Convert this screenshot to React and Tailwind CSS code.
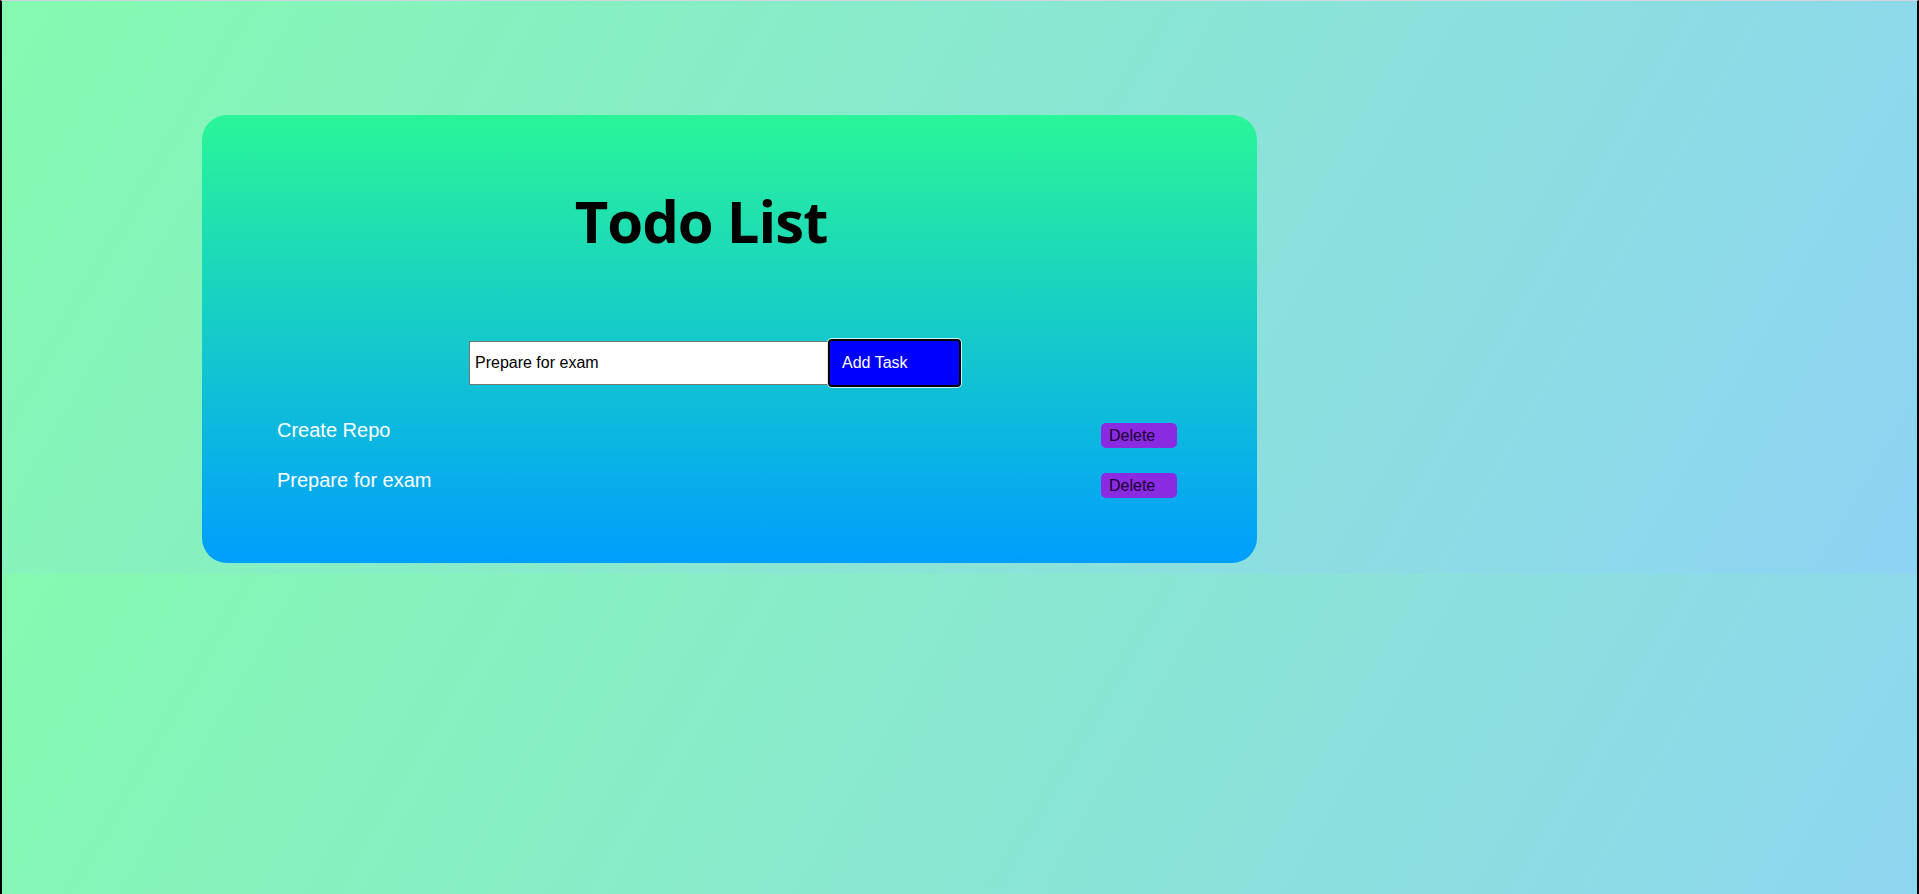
import { useState } from "react";

export default function App() {
  const [task, setTask] = useState("Prepare for exam");
  const [todos, setTodos] = useState(["Create Repo", "Prepare for exam"]);

  const addTask = () => {
    if (!task.trim()) return;
    setTodos([...todos, task]);
  };

  const deleteTask = (i) => {
    setTodos(todos.filter((_, idx) => idx !== i));
  };

  return (
    <div className="min-h-screen border-x-2 border-x-black border-t border-t-[#d2d4de] bg-[linear-gradient(120deg,#84fab0_0%,#8fd3f4_100%)] bg-size-[100%_573px] bg-repeat font-['Liberation_Sans',Arial,sans-serif]">
      <div className="ml-[200px] mt-[114px] w-[1055px] h-[448px] rounded-[25px] bg-[linear-gradient(to_bottom,#2af598,#009efd)] pt-[77px]">
        <h1 className="w-[998px] text-center text-[58px] leading-none tracking-[-1px] font-bold text-black font-['Open_Sans',sans-serif]">
          Todo List
        </h1>

        <div className="mt-[89px] pl-[267px] flex items-center h-[48px]">
          <input
            className="w-[359px] h-[44px] border border-[#767676] bg-white px-[5px] text-[16px] text-black outline-none"
            value={task}
            onChange={(e) => setTask(e.target.value)}
          />
          <button
            onClick={addTask}
            className="w-[133px] h-[48px] border-2 border-black rounded-[4px] ring-1 ring-white/80 bg-[#0000ff] text-white text-[16px] text-left pl-[12px]"
          >
            Add Task
          </button>
        </div>

        <ul className="mt-[32px] pl-[75px] pr-[80px]">
          {todos.map((t, i) => (
            <li key={i} className="h-[50px] flex justify-between items-start">
              <span className="text-[20px] leading-[23px] text-white">{t}</span>
              <button
                onClick={() => deleteTask(i)}
                className="mt-[4px] w-[76px] h-[25px] rounded-[5px] bg-[#8a2be2] text-[#1a0030] text-[16px] leading-[25px] text-left pl-2"
              >
                Delete
              </button>
            </li>
          ))}
        </ul>
      </div>
    </div>
  );
}
